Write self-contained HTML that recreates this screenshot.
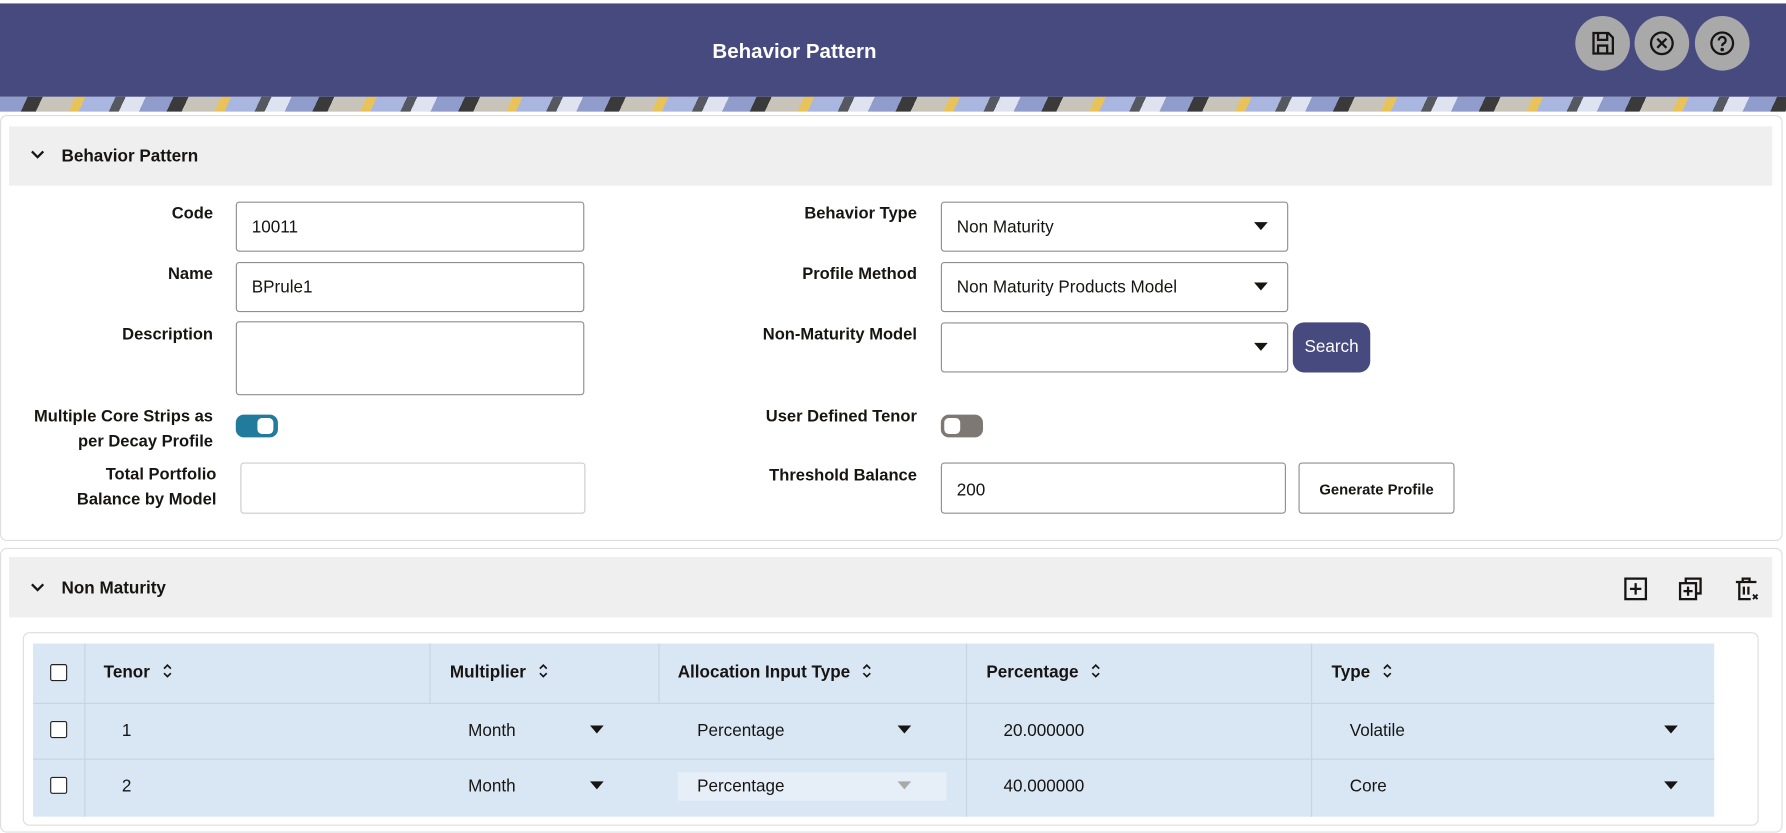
<!DOCTYPE html>
<html><head><meta charset="utf-8"><style>
*{box-sizing:border-box;margin:0;padding:0}
html,body{width:1786px;height:817px;overflow:hidden;background:#fff;font-family:"Liberation Sans",sans-serif;color:#161513}
#w{position:absolute;left:0;top:0;width:1568px;height:717px;transform:scale(1.13903);transform-origin:0 0}
.a{position:absolute}
.hdr{left:0;top:3px;width:1568px;height:82px;background:#464a7e}
.title{left:0;top:35px;width:1395px;text-align:center;color:#fff;font-weight:bold;font-size:18px}
.cb{width:48px;height:48px;border-radius:50%;background:#a9a9a9;top:14px}
.cb svg{position:absolute;left:12px;top:12px}
.ban{left:0;top:85px;width:1568px;height:13px;background:repeating-linear-gradient(115deg,#8f9ccc 0 22px,#3a3a3a 22px 34px,#c9c4ba 34px 60px,#e8c35a 60px 68px,#a9b6e0 68px 92px,#55585e 92px 100px,#dfe3ef 100px 116px)}
.card{border:1px solid #ddd;border-radius:6px;background:#fff}
.sh{background:#efefef}
.sh b{position:absolute;left:46px;font-size:15px}
.chev{position:absolute;left:18px}
.lab{font-size:14.5px;font-weight:bold;text-align:right;width:180px;line-height:22px}
.inp{border:1px solid #8f8f8f;border-radius:3px;background:#fff;font-size:15px;padding-left:13px}
.dd{position:absolute;right:17px;top:50%;margin-top:-4px;border-left:6px solid transparent;border-right:6px solid transparent;border-top:7px solid #161513}
.th{font-weight:bold;font-size:15px}
.srt{display:inline-block;margin-left:10px;vertical-align:-1px}
.chk{width:15px;height:15px;border:1.5px solid #222;border-radius:2px;background:#fff}
.vl{position:absolute;width:1px;background:#c7d3e0}
.t{font-size:15px}
</style></head><body><div id="w">
<div class="a hdr"></div>
<div class="a title">Behavior Pattern</div>
<div class="a cb" style="left:1383px"><svg width="24" height="24" viewBox="0 0 24 24" fill="none" stroke="#161513" stroke-width="2"><path d="M4 3h13l4 4v14H4z"/><path d="M8 3v6h8V3M8 21v-7h8v7"/></svg></div>
<div class="a cb" style="left:1435px"><svg width="24" height="24" viewBox="0 0 24 24" fill="none" stroke="#161513" stroke-width="2"><circle cx="12" cy="12" r="9.5"/><path d="M8 8l8 8M16 8l-8 8"/></svg></div>
<div class="a cb" style="left:1488px"><svg width="24" height="24" viewBox="0 0 24 24" fill="none" stroke="#161513" stroke-width="2"><circle cx="12" cy="12" r="9.5"/><path d="M9 9.5a3 3 0 1 1 4 2.8c-1 .5-1 1.2-1 2.2"/><circle cx="12" cy="17.5" r=".6" fill="#161513"/></svg></div>
<div class="a ban"></div>

<div class="a card" style="left:0;top:101px;width:1565px;height:374px"></div>
<div class="a sh" style="left:8px;top:111px;width:1548px;height:52px"><svg class="chev" style="top:20px" width="14" height="10" viewBox="0 0 14 10"><path d="M2 2l5 5 5-5" fill="none" stroke="#161513" stroke-width="2"/></svg><b style="top:18px">Behavior Pattern</b></div>

<div class="a lab" style="left:7px;top:177px">Code</div>
<div class="a inp" style="left:207px;top:177px;width:306px;height:44px;line-height:44px">10011</div>
<div class="a lab" style="left:7px;top:230px">Name</div>
<div class="a inp" style="left:207px;top:230px;width:306px;height:44px;line-height:44px">BPrule1</div>
<div class="a lab" style="left:7px;top:283px">Description</div>
<div class="a inp" style="left:207px;top:282px;width:306px;height:65px"></div>
<div class="a lab" style="left:7px;top:355px">Multiple Core Strips as per Decay Profile</div>
<div class="a" style="left:207px;top:364px;width:37px;height:20px;border-radius:7px;background:#227b9c"><div class="a" style="left:19px;top:3px;width:14px;height:14px;border-radius:4px;background:#fff"></div></div>
<div class="a lab" style="left:40px;top:406px;width:150px">Total Portfolio Balance by Model</div>
<div class="a inp" style="left:211px;top:406px;width:303px;height:45px;border-color:#ccc"></div>

<div class="a lab" style="left:625px;top:177px">Behavior Type</div>
<div class="a inp" style="left:826px;top:177px;width:305px;height:44px;line-height:44px">Non Maturity<span class="dd"></span></div>
<div class="a lab" style="left:625px;top:230px">Profile Method</div>
<div class="a inp" style="left:826px;top:230px;width:305px;height:44px;line-height:44px">Non Maturity Products Model<span class="dd"></span></div>
<div class="a lab" style="left:585px;top:283px;width:220px">Non-Maturity Model</div>
<div class="a inp" style="left:826px;top:283px;width:305px;height:44px"><span class="dd"></span></div>
<div class="a" style="left:1135px;top:283px;width:68px;height:44px;border-radius:10px;background:#464a7e;color:#fff;font-size:15px;text-align:center;line-height:44px">Search</div>
<div class="a lab" style="left:585px;top:355px;width:220px">User Defined Tenor</div>
<div class="a" style="left:826px;top:364px;width:37px;height:20px;border-radius:7px;background:#7d7874"><div class="a" style="left:3px;top:3px;width:14px;height:14px;border-radius:4px;background:#fff"></div></div>
<div class="a lab" style="left:585px;top:407px;width:220px">Threshold Balance</div>
<div class="a inp" style="left:826px;top:406px;width:303px;height:45px;line-height:47px">200</div>
<div class="a" style="left:1140px;top:406px;width:137px;height:45px;border:1px solid #8f8f8f;border-radius:3px;font-size:13px;font-weight:bold;text-align:center;line-height:45px">Generate Profile</div>

<div class="a card" style="left:0;top:481px;width:1565px;height:250px"></div>
<div class="a sh" style="left:8px;top:489px;width:1548px;height:53px"><svg class="chev" style="top:22px" width="14" height="10" viewBox="0 0 14 10"><path d="M2 2l5 5 5-5" fill="none" stroke="#161513" stroke-width="2"/></svg><b style="top:19px">Non Maturity</b></div>
<svg class="a" style="left:1424px;top:505px" width="24" height="24" viewBox="0 0 24 24" fill="none" stroke="#161513" stroke-width="2"><rect x="3" y="3" width="18" height="18"/><path d="M12 7v10M7 12h10"/></svg>
<svg class="a" style="left:1472px;top:505px" width="24" height="24" viewBox="0 0 24 24" fill="none" stroke="#161513" stroke-width="2"><path d="M8 7V3h13v13h-4"/><rect x="3" y="7" width="14" height="14"/><path d="M10 10v8M6 14h8"/></svg>
<svg class="a" style="left:1522px;top:505px" width="24" height="24" viewBox="0 0 24 24" fill="none" stroke="#161513" stroke-width="2"><path d="M2 6h18M8 6V3h6v3M5 6v15h10M9 10v7M13 10v7"/><path d="M17 17l4 4M21 17l-4 4" stroke-width="1.6"/></svg>

<div class="a" style="left:20px;top:555px;width:1524px;height:170px;border:1px solid #ddd;border-radius:6px"></div>
<div class="a" style="left:29px;top:565px;width:1476px;height:152px;background:#d9e7f4"></div>
<div class="a" style="left:29px;top:617px;width:1476px;height:1px;background:#c7d3e0"></div>
<div class="a" style="left:29px;top:666px;width:1476px;height:1px;background:#c7d3e0"></div>
<div class="vl" style="left:74px;top:565px;height:152px"></div>
<div class="vl" style="left:377px;top:565px;height:52px"></div>
<div class="vl" style="left:578px;top:565px;height:52px"></div>
<div class="vl" style="left:848px;top:565px;height:152px"></div>
<div class="vl" style="left:1151px;top:565px;height:152px"></div>

<div class="a chk" style="left:44px;top:583px"></div>
<div class="a chk" style="left:44px;top:633px"></div>
<div class="a chk" style="left:44px;top:682px"></div>
<div class="a th" style="left:91px;top:582px">Tenor<svg class="srt" width="10" height="14" viewBox="0 0 10 14" fill="none" stroke="#161513" stroke-width="1.5"><path d="M2 5l3-3 3 3M2 9l3 3 3-3"/></svg></div>
<div class="a th" style="left:395px;top:582px">Multiplier<svg class="srt" width="10" height="14" viewBox="0 0 10 14" fill="none" stroke="#161513" stroke-width="1.5"><path d="M2 5l3-3 3 3M2 9l3 3 3-3"/></svg></div>
<div class="a th" style="left:595px;top:582px">Allocation Input Type<svg class="srt" width="10" height="14" viewBox="0 0 10 14" fill="none" stroke="#161513" stroke-width="1.5"><path d="M2 5l3-3 3 3M2 9l3 3 3-3"/></svg></div>
<div class="a th" style="left:866px;top:582px">Percentage<svg class="srt" width="10" height="14" viewBox="0 0 10 14" fill="none" stroke="#161513" stroke-width="1.5"><path d="M2 5l3-3 3 3M2 9l3 3 3-3"/></svg></div>
<div class="a th" style="left:1169px;top:582px">Type<svg class="srt" width="10" height="14" viewBox="0 0 10 14" fill="none" stroke="#161513" stroke-width="1.5"><path d="M2 5l3-3 3 3M2 9l3 3 3-3"/></svg></div>

<div class="a t" style="left:107px;top:633px">1</div>
<div class="a t" style="left:411px;top:633px">Month</div><span class="a dd" style="left:518px;top:637px;right:auto;margin:0"></span>
<div class="a t" style="left:612px;top:633px">Percentage</div><span class="a dd" style="left:788px;top:637px;right:auto;margin:0"></span>
<div class="a t" style="left:881px;top:633px">20.000000</div>
<div class="a t" style="left:1185px;top:633px">Volatile</div><span class="a dd" style="left:1461px;top:637px;right:auto;margin:0"></span>

<div class="a t" style="left:107px;top:682px">2</div>
<div class="a t" style="left:411px;top:682px">Month</div><span class="a dd" style="left:518px;top:686px;right:auto;margin:0"></span>
<div class="a" style="left:595px;top:678px;width:236px;height:25px;background:#e6eef7"></div>
<div class="a t" style="left:612px;top:682px">Percentage</div><span class="a dd" style="left:788px;top:686px;right:auto;margin:0;border-top-color:#aaa"></span>
<div class="a t" style="left:881px;top:682px">40.000000</div>
<div class="a t" style="left:1185px;top:682px">Core</div><span class="a dd" style="left:1461px;top:686px;right:auto;margin:0"></span>
</div></body></html>
